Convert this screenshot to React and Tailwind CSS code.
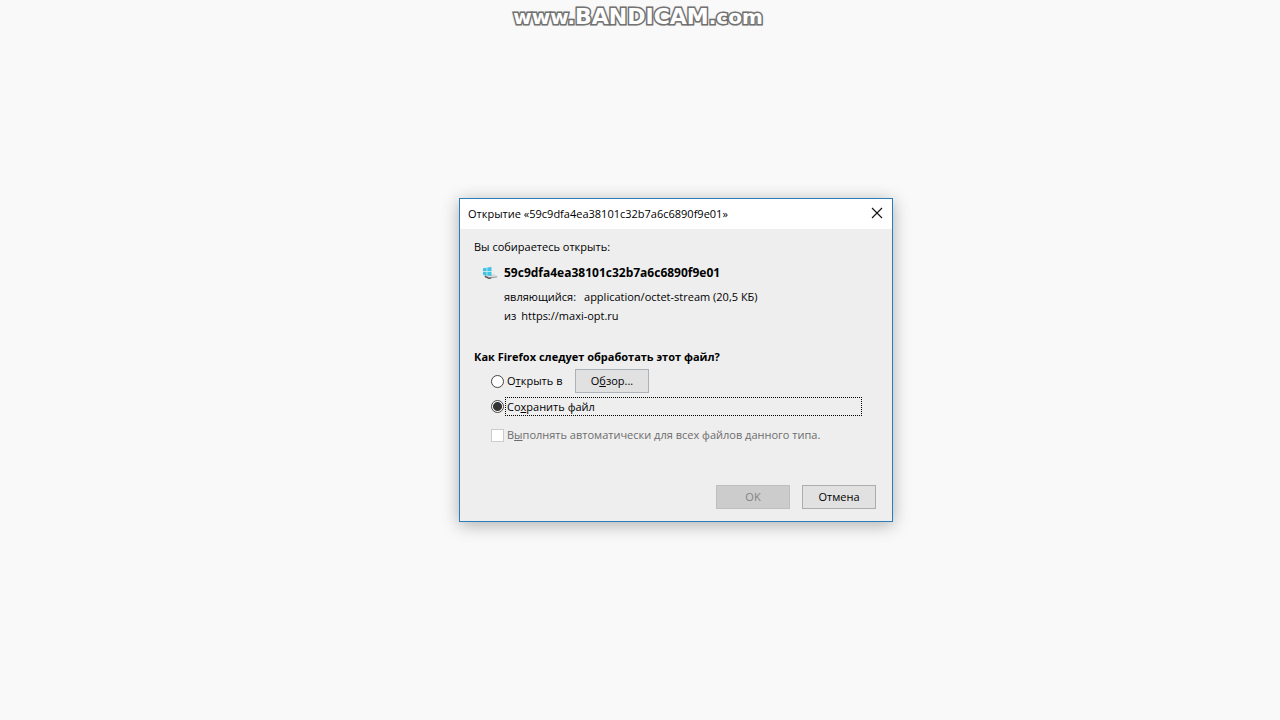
import { useState } from 'react';

function DriveIcon() {
  return (
    <svg className="h-4 w-4 shrink-0" viewBox="0 0 16 16" aria-hidden="true">
      <path d="M3 9.5 L12 9 L15.5 11.2 L7 12.2 Z" fill="#dcdcdc" />
      <path d="M3 9.5 L7 12.2 L15.5 11.2 L15 12.6 L7 13.8 L3 11.8 Z" fill="#a5a5a5" />
      <path d="M2.5 10.8 L7 12.8 L9.5 12.5 L9 13.6 L7 14 L3 12.2 Z" fill="#4c4c4c" />
      <path d="M1 3.2 L4.6 2.7 V6.2 H1 Z M5.3 2.6 L9.5 2 V6.2 H5.3 Z M1 6.9 H4.6 V10.4 L1 9.9 Z M5.3 6.9 H9.5 V11 L5.3 10.5 Z" fill="#3fc4e6" />
    </svg>
  );
}

function Watermark() {
  return (
    <div className="absolute inset-x-0 top-[3px] flex h-7 items-baseline justify-center pr-1 font-['DejaVu_Sans',sans-serif] font-bold leading-7 text-white [paint-order:stroke_fill] [-webkit-text-stroke:3px_#6a6a6a] [text-shadow:0_0_3px_#8a8a8a]">
      <span className="text-[20px]">www.</span>
      <span className="text-[22px]">BANDICAM</span>
      <span className="text-[20px]">.com</span>
    </div>
  );
}

const radioClass =
  "m-0 size-[13px] shrink-0 appearance-none rounded-full border border-[#444] bg-white outline-none checked:bg-[radial-gradient(circle,#333_0_4px,#fff_5px)]";

export default function App() {
  const [action, setAction] = useState('save');

  return (
    <main className="relative flex min-h-screen items-center justify-center bg-[#f9f9f9] pl-18 font-['Open_Sans','Noto_Sans',sans-serif] text-[11px] leading-5 text-black">
      <Watermark />
      <section
        role="dialog"
        aria-labelledby="dialog-title"
        className="w-[434px] border border-[#2a7db8] bg-[#eeeeee] shadow-[0_3px_16px_rgba(0,0,0,0.3)]"
      >
        <header className="flex h-[30px] items-center justify-between bg-white pl-2 pr-[9px]">
          <h1 id="dialog-title">Открытие «59c9dfa4ea38101c32b7a6c6890f9e01»</h1>
          <button type="button" aria-label="Закрыть" className="flex h-[14px] w-3 items-start justify-center">
            <svg viewBox="0 0 12 12" className="size-3" aria-hidden="true">
              <path d="M1 1 L11 11 M11 1 L1 11" stroke="#111" strokeWidth="1.1" fill="none" />
            </svg>
          </button>
        </header>

        <div className="px-[14px] pb-3 pt-2">
          <p>Вы собираетесь открыть:</p>
          <div className="mt-[6px] flex items-center gap-[6px] pl-2">
            <DriveIcon />
            <strong className="text-[12px] font-bold">59c9dfa4ea38101c32b7a6c6890f9e01</strong>
          </div>
          <dl className="mt-1 pl-[30px] leading-[19px]">
            <div className="flex gap-2">
              <dt>являющийся:</dt>
              <dd>application/octet-stream (20,5 КБ)</dd>
            </div>
            <div className="flex gap-[5px]">
              <dt>из</dt>
              <dd>https://maxi-opt.ru</dd>
            </div>
          </dl>

          <fieldset className="mt-[22px]">
            <legend className="mb-[2px] font-bold">Как Firefox следует обработать этот файл?</legend>
            <div className="flex h-6 items-center pl-[17px]">
              <input id="open" type="radio" name="action" className={radioClass} checked={action === 'open'} onChange={() => setAction('open')} />
              <label htmlFor="open" className="w-[71px] pl-[3px]">О<u>т</u>крыть в</label>
              <button type="button" className="h-6 w-[74px] border border-[#adb2b8] bg-[#e1e1e1]">О<u>б</u>зор...</button>
            </div>
            <div className="mt-1 flex items-center pl-[17px] pr-4">
              <input id="save" type="radio" name="action" className={radioClass} checked={action === 'save'} onChange={() => setAction('save')} />
              <label htmlFor="save" className="ml-px h-[19px] flex-1 border border-dotted border-black pl-px leading-[17px]">Со<u>х</u>ранить файл</label>
            </div>
            <div className="mt-[9px] flex items-center pl-[17px] text-[#6d6d6d]">
              <input id="always" type="checkbox" disabled className="m-0 size-[13px] shrink-0 appearance-none border border-[#cccccc] bg-white" />
              <label htmlFor="always" className="pl-[3px]">В<u>ы</u>полнять автоматически для всех файлов данного типа.</label>
            </div>
          </fieldset>

          <footer className="mt-10 flex justify-end gap-3 pr-[2px]">
            <button type="button" disabled className="h-6 w-[74px] border border-[#bfbfbf] bg-[#cccccc] text-[#838383]">OK</button>
            <button type="button" className="h-6 w-[74px] border border-[#adadad] bg-[#e1e1e1]">Отмена</button>
          </footer>
        </div>
      </section>
    </main>
  );
}
